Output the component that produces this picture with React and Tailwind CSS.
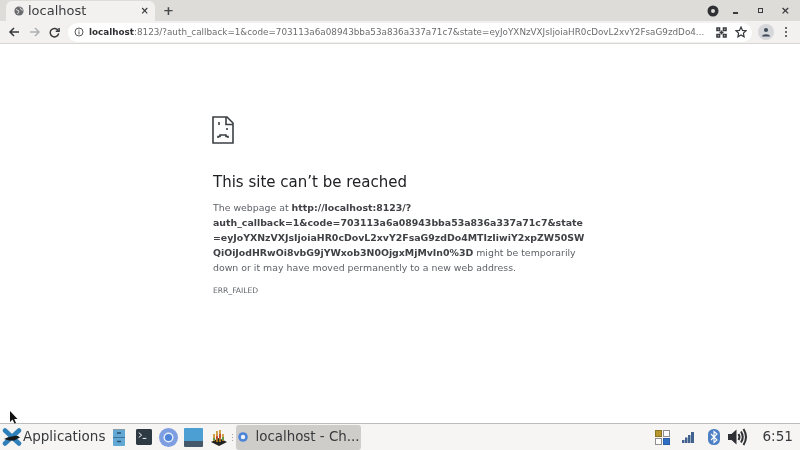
const font = { fontFamily: '"DejaVu Sans", sans-serif' };

function SadPage() {
  return (
    <svg width="22" height="28" viewBox="0 0 22 28" fill="none" stroke="#3c4043" strokeWidth="1.6" className="-ml-[1px]">
      <path d="M1 1H15L21 7V27H1Z" />
      <path d="M14 1V8.5H21" />
      <path d="M7 6V9" />
      <path d="M15 12V14" />
      <path d="M6 22V20.5H8V19H14V20.5H16V22" />
    </svg>
  );
}

function Globe({ size = 10, color = "#6a6c70" }) {
  return (
    <svg width={size} height={size} viewBox="0 0 10 10">
      <circle cx="5" cy="5" r="4.6" fill={color} />
      <path d="M2 3.5L5 5L3.5 8M6 1.5L7.5 4L9 4" stroke="#dfdddb" strokeWidth="1" fill="none" />
    </svg>
  );
}

function TabStrip() {
  return (
    <div className="h-[21px] bg-[#dedcd9] flex items-end shrink-0">
      <div className="ml-[6px] w-[149px] h-[20px] bg-[#f2f1ef] rounded-t-[6px] flex items-center pl-[8px] pr-[6px] pb-[1px]">
        <Globe />
        <span className="ml-[4px] text-[13px] leading-none text-[#3a3c3f]">localhost</span>
        <span className="ml-auto text-[#3a3c3f] text-[10px] font-bold leading-none">×</span>
      </div>
      <span className="ml-[8px] mb-[4px] text-[13px] font-bold leading-none text-[#45474a]">+</span>
      <div className="ml-auto h-full flex items-center">
        <svg width="12" height="12" viewBox="0 0 12 12" className="mr-[14px]">
          <circle cx="6" cy="6" r="5.5" fill="#2e3033" />
          <circle cx="6" cy="6" r="2" fill="#dedcd9" />
        </svg>
        <span className="w-[5px] h-[2px] bg-[#3a3c3f] mt-[5px] mr-[20px]" />
        <span className="w-[5px] h-[5px] border-[1.5px] border-[#3a3c3f] mr-[18px]" />
        <span className="text-[11px] font-bold leading-none text-[#3a3c3f] mr-[10px]">×</span>
      </div>
    </div>
  );
}

function Toolbar() {
  return (
    <div className="h-[23px] bg-[#f2f1ef] border-b border-[#d8d7d4] flex items-center shrink-0">
      <svg width="12" height="12" viewBox="0 0 12 12" fill="none" stroke="#36383b" strokeWidth="1.5" className="ml-[8px]">
        <path d="M11 6H2M6 2L2 6L6 10" />
      </svg>
      <svg width="12" height="12" viewBox="0 0 12 12" fill="none" stroke="#aeb0b2" strokeWidth="1.5" className="ml-[9px]">
        <path d="M1 6H10M6 2L10 6L6 10" />
      </svg>
      <svg width="11" height="11" viewBox="0 0 12 12" fill="none" stroke="#36383b" strokeWidth="1.6" className="ml-[8px]">
        <path d="M10 4A4.6 4.6 0 1 0 10.5 7" />
        <path d="M11 1V4.6H7.4" />
      </svg>
      <div className="ml-[8px] w-[684px] h-[19px] bg-white rounded-full flex items-center pl-[6px] overflow-hidden whitespace-nowrap shrink-0">
        <svg width="10" height="10" viewBox="0 0 10 10" fill="none" stroke="#55575a" strokeWidth="1" className="shrink-0">
          <circle cx="5" cy="5" r="4" />
          <path d="M5 4.4V7.4M5 2.6V3.6" />
        </svg>
        <span className="ml-[5px] text-[8.8px] leading-none text-[#6b6d70]">
          <span className="text-[#2e3033] font-semibold">localhost</span>
          :8123/?auth_callback=1&amp;code=703113a6a08943bba53a836a337a71c7&amp;state=eyJoYXNzVXJsIjoiaHR0cDovL2xvY2FsaG9zdDo4...
        </span>
        <svg width="11" height="11" viewBox="0 0 11 11" fill="none" stroke="#3a3c3f" strokeWidth="1.6" className="ml-auto shrink-0">
          <path d="M1 1H3.5V3.5H1ZM7.5 1H10V3.5H7.5ZM1 7.5H3.5V10H1ZM7.5 7.5H10V10H7.5ZM3.5 5.5H7.5M5.5 3.5V7.5" />
        </svg>
        <svg width="12" height="12" viewBox="0 0 12 12" fill="none" stroke="#36383b" strokeWidth="1.2" className="ml-[8px] mr-[5px] shrink-0">
          <path d="M6 1L7.5 4.4L11 4.8L8.4 7.1L9.1 10.7L6 8.9L2.9 10.7L3.6 7.1L1 4.8L4.5 4.4Z" />
        </svg>
      </div>
      <div className="ml-[6px] w-[16px] h-[16px] rounded-full bg-[#d5d7da] flex items-center justify-center shrink-0">
        <svg width="10" height="10" viewBox="0 0 10 10" fill="#3f4a5a">
          <circle cx="5" cy="3" r="2.1" />
          <path d="M1 9.4C1 6.6 9 6.6 9 9.4Z" />
        </svg>
      </div>
      <div className="ml-[11px] flex flex-col gap-[2px] shrink-0">
        <span className="w-[2px] h-[2px] bg-[#3a3c3f] rounded-full" />
        <span className="w-[2px] h-[2px] bg-[#3a3c3f] rounded-full" />
        <span className="w-[2px] h-[2px] bg-[#3a3c3f] rounded-full" />
      </div>
    </div>
  );
}

function ErrorPage() {
  return (
    <main className="flex-1 bg-white pl-[213px] pt-[72px]">
      <SadPage />
      <h1 className="mt-[28px] text-[15px] leading-[20px] font-normal text-[#202124]">
        This site can’t be reached
      </h1>
      <div className="mt-[8px] text-[9.4px] leading-[15px] text-[#5f6368] whitespace-nowrap">
        <p>
          The webpage at <b className="text-[#3f4145]">http://localhost:8123/?</b>
        </p>
        <p className="font-bold text-[#3f4145]">auth_callback=1&amp;code=703113a6a08943bba53a836a337a71c7&amp;state</p>
        <p className="font-bold text-[#3f4145]">=eyJoYXNzVXJsIjoiaHR0cDovL2xvY2FsaG9zdDo4MTIzIiwiY2xpZW50SW</p>
        <p>
          <b className="text-[#3f4145]">QiOiJodHRwOi8vbG9jYWxob3N0OjgxMjMvIn0%3D</b> might be temporarily
        </p>
        <p>down or it may have moved permanently to a new web address.</p>
      </div>
      <p className="mt-[11px] text-[7.6px] leading-[10px] text-[#5f6368]">ERR_FAILED</p>
    </main>
  );
}

function XfceLogo() {
  return (
    <svg width="20" height="18" viewBox="0 0 20 18">
      <path d="M3 2.5L17 15.5M17 2.5L3 15.5" stroke="#2f7fb8" strokeWidth="4.5" strokeLinecap="round" />
      <path d="M2 11Q6 8.5 10 8.5Q13 7.5 16 8L18 9.5L15 11L12 12.5L7 12.5Z" fill="#17181a" />
    </svg>
  );
}

function Taskbar() {
  return (
    <footer className="h-[27px] bg-[#f6f5f4] border-t border-[#bdbcb9] flex items-center shrink-0">
      <div className="ml-[2px]"><XfceLogo /></div>
      <span className="ml-[1px] text-[13.5px] leading-none text-[#37393c]">Applications</span>
      <svg width="12" height="17" viewBox="0 0 12 17" className="ml-[8px]">
        <rect width="12" height="17" rx="1" fill="#62a8d4" />
        <path d="M0 0.5H12" stroke="#8a9aa6" />
        <path d="M0 8.5H12" stroke="#3f7196" />
        <path d="M4 4H8M4 12.5H8" stroke="#27506e" strokeWidth="1.4" />
      </svg>
      <svg width="16" height="16" viewBox="0 0 17 17" className="ml-[11px]">
        <rect width="17" height="17" rx="1.5" fill="#2d3a44" />
        <path d="M3 4L6 6.5L3 9" stroke="#fff" fill="none" />
        <path d="M7 10H11" stroke="#fff" />
      </svg>
      <svg width="19" height="19" viewBox="0 0 19 19" className="ml-[7px]">
        <circle cx="9.5" cy="9.5" r="9.5" fill="#7d9ee0" />
        <circle cx="9.5" cy="9.5" r="5" fill="#e8eefb" />
        <circle cx="9.5" cy="9.5" r="3.6" fill="#4d84d8" />
      </svg>
      <div className="ml-[6px] w-[19px] h-[19px] rounded-[1px] overflow-hidden flex flex-col">
        <div className="h-[13px] bg-[#4b9fd3]" />
        <div className="flex-1 bg-[#44586a]" />
      </div>
      <svg width="18" height="19" viewBox="0 0 18 19" className="ml-[7px]">
        <path d="M1 14L9 10L17 14L9 18Z" fill="#222" />
        <path d="M4 13V6M7 14V3M10 14V2M13 13V6" stroke="#c98a1c" strokeWidth="1.6" />
        <path d="M7 8V11M10 6V10" stroke="#c0392b" strokeWidth="1.6" />
        <path d="M4 10V12M13 9V12" stroke="#4a9a3a" strokeWidth="1.6" />
      </svg>
      <div className="ml-[4px] mr-[3px] flex flex-col gap-[2px]">
        <span className="w-[1px] h-[1px] bg-[#a8a8a6]" />
        <span className="w-[1px] h-[1px] bg-[#a8a8a6]" />
        <span className="w-[1px] h-[1px] bg-[#a8a8a6]" />
      </div>
      <div className="w-[125px] h-[25px] bg-[#cfcdca] rounded-[3px] flex items-center pl-[2px]">
        <svg width="10" height="10" viewBox="0 0 10 10">
          <circle cx="5" cy="5" r="4.8" fill="#4d84d8" />
          <circle cx="5" cy="5" r="2.2" fill="#f0f3fa" />
        </svg>
        <span className="ml-[7px] text-[13.4px] leading-none text-[#37393c] whitespace-nowrap">localhost - Ch...</span>
      </div>
      <div className="ml-auto flex items-center">
        <div className="grid grid-cols-2 gap-[1px] w-[15px]">
          <span className="h-[7px] bg-[#b8962e] border border-[#8a7424]" />
          <span className="h-[7px] bg-white border border-[#8f8f8f]" />
          <span className="h-[7px] bg-white border border-[#8f8f8f]" />
          <span className="h-[7px] bg-[#2f6fc4] border border-[#2a5fa8]" />
        </div>
        <svg width="12" height="11" viewBox="0 0 12 11" className="ml-[12px]" fill="#41618f">
          <path d="M0 8H2.5V11H0ZM3 5.5H5.5V11H3ZM6 3H8.5V11H6ZM9 0H12V11H9Z" />
        </svg>
        <svg width="12" height="16" viewBox="0 0 12 16" className="ml-[14px]">
          <rect width="12" height="16" rx="5.5" fill="#4d7fc4" />
          <path d="M3 5L9 11L6 13.5V2.5L9 5L3 11" stroke="#fff" strokeWidth="1.1" fill="none" />
        </svg>
        <svg width="20" height="18" viewBox="0 0 20 18" className="ml-[8px]" fill="none" stroke="#2e3033">
          <path d="M0 6H3.5L8.5 1.5V16.5L3.5 12H0Z" fill="#2e3033" stroke="none" />
          <path d="M10.5 6Q12.5 9 10.5 12" strokeWidth="2" />
          <path d="M13 3.5Q16.5 9 13 14.5" strokeWidth="2" />
          <path d="M15.5 1Q20.5 9 15.5 17" strokeWidth="2" />
        </svg>
        <span className="ml-[14px] mr-[7px] text-[13.6px] leading-none text-[#37393c]">6:51</span>
      </div>
    </footer>
  );
}

export default function App() {
  return (
    <div className="relative w-[800px] h-[450px] overflow-hidden flex flex-col bg-white blur-[0.35px]" style={font}>
      <TabStrip />
      <Toolbar />
      <ErrorPage />
      <Taskbar />
      <svg width="9" height="13" viewBox="0 0 9 13" className="absolute left-[9px] top-[411px]">
        <path d="M1 0V11L3.5 8.5L5.5 12.5L7 12L5.2 8H8.5Z" fill="#111" />
      </svg>
    </div>
  );
}
